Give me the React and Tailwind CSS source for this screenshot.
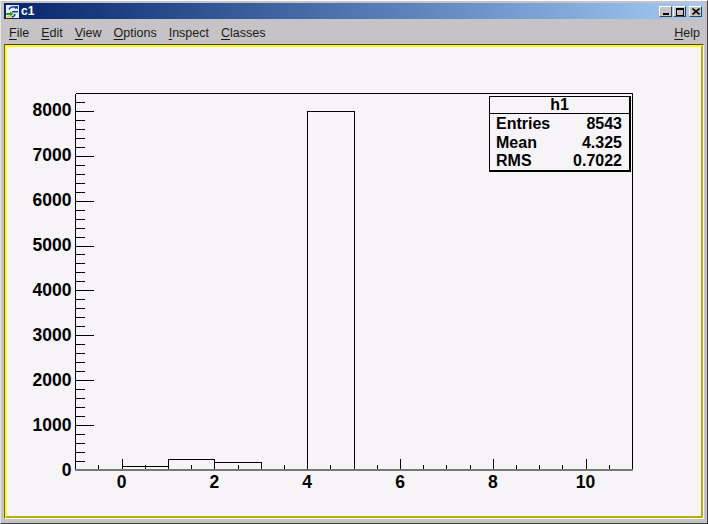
import React from "react";

const FONT = "font-['Liberation_Sans',Arial,sans-serif]";

// plot frame in page pixels
const LEFT = 75.5;
const RIGHT = 632.5;
const TOP = 93.5;
const BOTTOM = 470;
const xPos = (v) => 122 + v * 46.4;
const yPos = (v) => 470 - v * 0.0449;

const xTicks = Array.from({ length: 23 }, (_, i) => -0.5 + i * 0.5);
const yTicks = Array.from({ length: 42 }, (_, i) => (i + 1) * 200);
const xLabels = [0, 2, 4, 6, 8, 10];
const yLabels = [0, 1000, 2000, 3000, 4000, 5000, 6000, 7000, 8000];

const bins = [
  [0, 1, 80],
  [1, 2, 240],
  [2, 3, 170],
  [4, 5, 8000],
];

function Chart() {
  return (
    <svg width="693" height="469" viewBox="7 47 693 469" className="block">
      <g stroke="#000" strokeWidth="1" shapeRendering="crispEdges" fill="none">
        <path d={`M${LEFT} ${TOP}H${RIGHT}V${BOTTOM}M${LEFT} ${TOP}V${BOTTOM}`} />
        {xTicks.map((t) => (
          <line
            key={t}
            x1={Math.floor(xPos(t)) + 0.5}
            x2={Math.floor(xPos(t)) + 0.5}
            y1={BOTTOM}
            y2={t % 2 === 0 ? BOTTOM - 11 : BOTTOM - 5}
          />
        ))}
        {yTicks.map((t) => (
          <line
            key={t}
            x1={LEFT}
            x2={t % 1000 === 0 ? LEFT + 18 : LEFT + 9}
            y1={Math.round(yPos(t)) + 0.5}
            y2={Math.round(yPos(t)) + 0.5}
          />
        ))}
        {bins.map(([a, b, h]) => (
          <path
            key={a}
            d={`M${Math.floor(xPos(a)) + 0.5} ${BOTTOM}V${Math.round(yPos(h)) + 0.5}H${Math.floor(xPos(b)) + 0.5}V${BOTTOM}`}
          />
        ))}
      </g>
      <rect x="75" y="469" width="558" height="2" fill="#777" shapeRendering="crispEdges" />
      <g className={`${FONT} fill-black font-bold text-[17.5px]`}>
        {yLabels.map((v) => (
          <text key={v} x="71.5" y={yPos(v) + 5.5} textAnchor="end">
            {v}
          </text>
        ))}
        {xLabels.map((v) => (
          <text key={v} x={xPos(v) - 0.4} y="488" textAnchor="middle">
            {v}
          </text>
        ))}
      </g>
    </svg>
  );
}

function StatRow({ label, value }) {
  return (
    <div className="flex h-[18.5px] items-center justify-between pl-[6px] pr-[7px]">
      <span>{label}</span>
      <span>{value}</span>
    </div>
  );
}

function StatsBox() {
  return (
    <div
      className={`${FONT} absolute left-[482px] top-[49px] h-[76px] w-[142px] border border-black border-r-2 border-b-2 bg-[#f7f4f8] text-[16px] font-bold leading-none text-black`}
    >
      <div className="flex h-[17px] items-center justify-center border-b border-black">h1</div>
      <div className="pt-[1px]">
        <StatRow label="Entries" value="8543" />
        <StatRow label="Mean" value="4.325" />
        <StatRow label="RMS" value="0.7022" />
      </div>
    </div>
  );
}

function AppIcon() {
  return (
    <svg width="15" height="15" viewBox="0 0 15 15" className="shrink-0">
      <rect x="0.5" y="0.5" width="14" height="14" fill="#e8eef8" stroke="#10206a" />
      <path d="M4 5.5a4 4 0 0 1 7-1" fill="none" stroke="#1a3aa8" strokeWidth="1.5" />
      <path d="M9 2h4v3.5z" fill="#1a3aa8" />
      <path d="M7 7h6v1.5H7z" fill="#18408f" />
      <path d="M1 9h5v2H1z" fill="#20a030" />
      <path d="M5 7.5l3.5 2.5L5 12.5z" fill="#20a030" />
      <path d="M2 11.5h6v2H2z" fill="#e8d020" />
      <path d="M10 10a3.5 3.5 0 0 1-3 3" fill="none" stroke="#1a3aa8" strokeWidth="1.5" />
    </svg>
  );
}

function WinButton({ children, className = "" }) {
  return (
    <div
      className={`flex h-[11px] w-[13px] items-center justify-center border border-t-white border-l-white border-r-[#404040] border-b-[#404040] bg-[#c6c3c6] ${className}`}
    >
      {children}
    </div>
  );
}

function TitleBar() {
  return (
    <div className="flex h-[16px] items-center bg-gradient-to-r from-[#08246b] to-[#a5cbf7] pl-[1px] pr-[2px]">
      <AppIcon />
      <span className={`${FONT} ml-[1px] text-[12px] font-bold leading-none text-white`}>c1</span>
      <div className="ml-auto flex items-center pt-[1px]">
        <WinButton>
          <div className="mt-[5px] h-[2px] w-[6px] bg-black" />
        </WinButton>
        <WinButton className="ml-[1px]">
          <div className="h-[8px] w-[8px] border border-t-2 border-black" />
        </WinButton>
        <WinButton className="ml-[3px]">
          <svg width="8" height="7" viewBox="0 0 8 7">
            <path d="M0.5 0.5L7.5 6.5M7.5 0.5L0.5 6.5" stroke="#000" strokeWidth="1.6" />
          </svg>
        </WinButton>
      </div>
    </div>
  );
}

function MenuItem({ first, rest }) {
  return (
    <span>
      <span className="underline decoration-1 underline-offset-2">{first}</span>
      {rest}
    </span>
  );
}

function MenuBar() {
  return (
    <div
      className={`${FONT} flex h-[25px] items-center gap-[12px] pl-[5px] pr-[4px] pt-[3px] text-[12.5px] leading-none text-[#1a1a1a]`}
    >
      <MenuItem first="F" rest="ile" />
      <MenuItem first="E" rest="dit" />
      <MenuItem first="V" rest="iew" />
      <MenuItem first="O" rest="ptions" />
      <MenuItem first="I" rest="nspect" />
      <MenuItem first="C" rest="lasses" />
      <div className="ml-auto">
        <MenuItem first="H" rest="elp" />
      </div>
    </div>
  );
}

export default function App() {
  return (
    <div className="h-[524px] w-[708px] overflow-hidden bg-[#c6c3c6]">
      <div className="flex h-full flex-col border border-t-[#ffffff] border-l-[#e6e6e6] border-r-[#404040] border-b-[#404040] p-[3px] pt-[2px]">
        <TitleBar />
        <MenuBar />
        <div className="border border-t-[#404040] border-l-[#606060] border-r-white border-b-white">
          <div className="relative border-2 border-t-[#ffff00] border-l-[#ffff00] border-r-[#b8b000] border-b-[#b8b000] bg-[#f7f4f8]">
            <Chart />
            <StatsBox />
          </div>
        </div>
      </div>
    </div>
  );
}
